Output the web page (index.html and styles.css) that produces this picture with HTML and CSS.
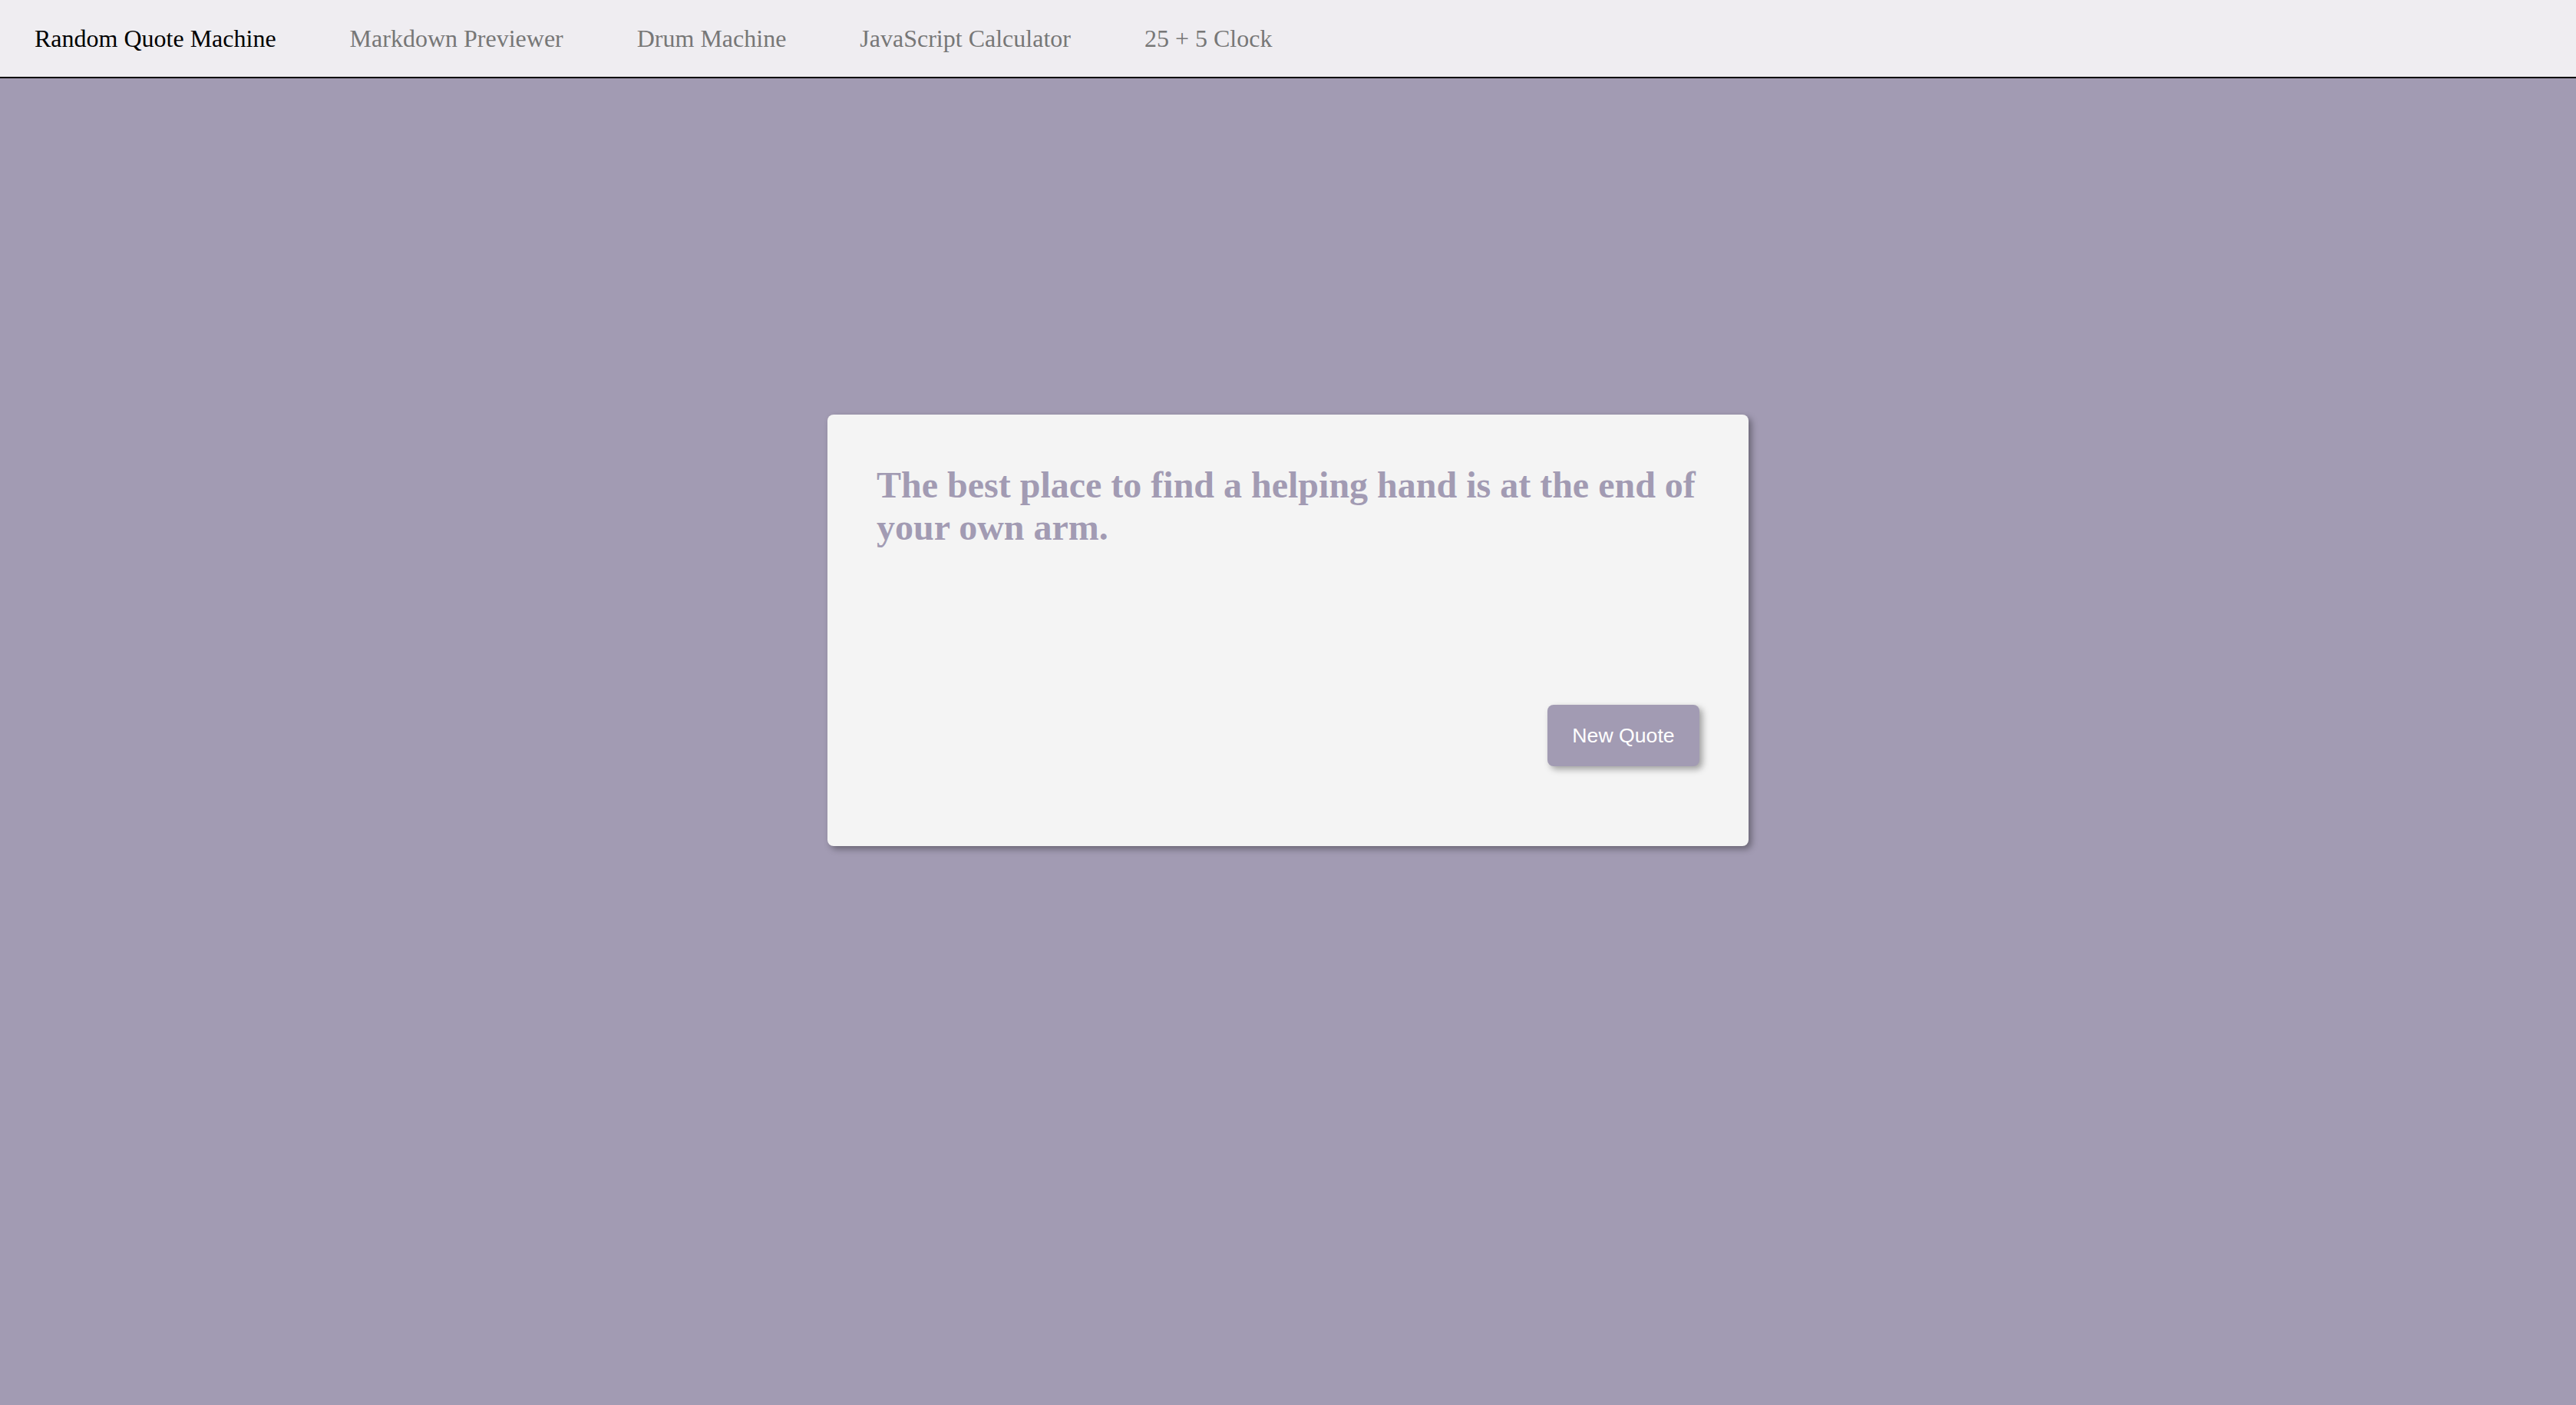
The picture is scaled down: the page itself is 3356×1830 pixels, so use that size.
FILE: index.html
```html
<!DOCTYPE html>
<html lang="en">
<head>
<meta charset="utf-8">
<title>Random Quote Machine</title>
<link rel="stylesheet" href="styles.css">
</head>
<body>
<nav class="topnav">
  <a class="nav-link active" href="#">Random Quote Machine</a>
  <a class="nav-link" href="#">Markdown Previewer</a>
  <a class="nav-link" href="#">Drum Machine</a>
  <a class="nav-link" href="#">JavaScript Calculator</a>
  <a class="nav-link" href="#">25 + 5 Clock</a>
</nav>
<main class="stage">
  <section class="quote-box" id="quote-box">
    <p class="quote-text" id="text">The best place to find a helping hand is at the end of your own arm.</p>
    <div class="actions">
      <button class="new-quote" id="new-quote" type="button">New Quote</button>
    </div>
  </section>
</main>
</body>
</html>
```

FILE: styles.css
```css
html, body {
  margin: 0;
  padding: 0;
}

body {
  background: #a29bb3;
  font-family: "Liberation Serif", "Times New Roman", serif;
  min-height: 100vh;
}

.topnav {
  display: flex;
  align-items: center;
  gap: 96px;
  height: 100px;
  padding-left: 45px;
  background: #efedf1;
  border-bottom: 2px solid #000;
}

.nav-link {
  font-size: 32px;
  color: #777777;
  text-decoration: none;
}

.nav-link.active {
  color: #000000;
}

.stage {
  display: flex;
  justify-content: center;
  padding-top: 438px;
}

.quote-box {
  width: 1200px;
  box-sizing: border-box;
  padding: 64px 64px 104px;
  background: #f4f4f4;
  border-radius: 8px;
  box-shadow: 4px 4px 8px rgba(0, 0, 0, 0.35);
  display: flex;
  flex-direction: column;
}

.quote-text {
  margin: 0;
  min-height: 314px;
  font-size: 48px;
  font-weight: bold;
  color: #a29bb3;
}

.actions {
  display: flex;
  justify-content: flex-end;
}

.new-quote {
  width: 198px;
  height: 80px;
  border: none;
  border-radius: 8px;
  background: #a29bb3;
  color: #ffffff;
  font-family: "Liberation Sans", Arial, sans-serif;
  font-size: 26.67px;
  box-shadow: 4px 4px 8px rgba(0, 0, 0, 0.35);
  cursor: pointer;
}
```
